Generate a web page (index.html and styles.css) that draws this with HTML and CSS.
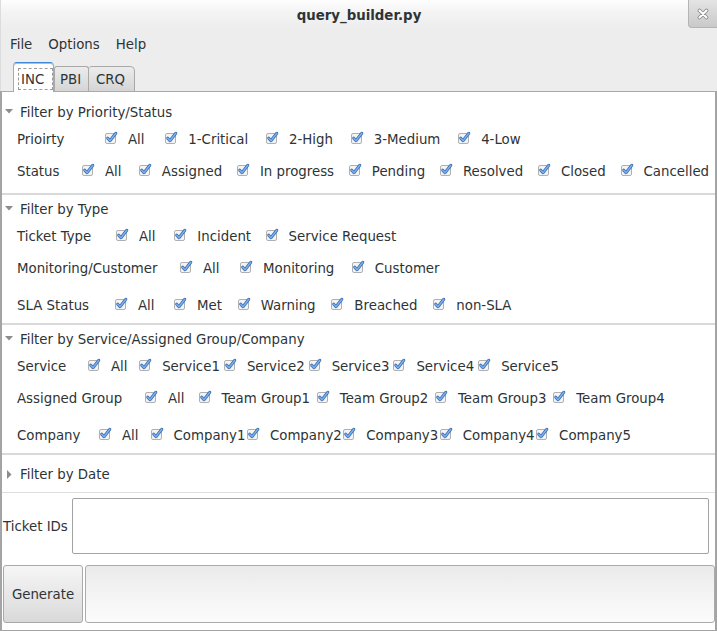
FILE: index.html
```html
<!DOCTYPE html>
<html>
<head>
<meta charset="utf-8">
<title>query_builder.py</title>
<link rel="stylesheet" href="styles.css">
</head>
<body>
<svg class="defs" width="0" height="0" aria-hidden="true">
  <symbol id="cb" viewBox="0 0 14 14">
    <rect x="1.5" y="2.5" width="10" height="10" rx="1.5" fill="#f4f4f4" stroke="#b0b0b0"/>
    <path d="M3.7 7.2 L6 9.7 L11.8 2.3" fill="none" stroke="#3b6eb3" stroke-width="3" stroke-linecap="round" stroke-linejoin="round"/>
    <path d="M3.7 7.2 L6 9.7 L11.8 2.3" fill="none" stroke="#7db0ee" stroke-width="1.4" stroke-linecap="round" stroke-linejoin="round"/>
  </symbol>
</svg>
<div class="window">
  <header class="titlebar">
    <span></span>
    <span class="title">query_builder.py</span>
    <span class="close-wrap">
      <span class="close">
        <svg width="12" height="12" viewBox="0 0 12 12">
          <path d="M2.5 2.5 L9.5 9.5 M9.5 2.5 L2.5 9.5" stroke="#8a8a8a" stroke-width="3.6" stroke-linecap="round"/>
          <path d="M2.5 2.5 L9.5 9.5 M9.5 2.5 L2.5 9.5" stroke="#ffffff" stroke-width="2" stroke-linecap="round"/>
        </svg>
      </span>
    </span>
  </header>
  <nav class="menubar">
    <span class="menu">File</span>
    <span class="menu">Options</span>
    <span class="menu">Help</span>
  </nav>
  <div class="tabbar">
    <div class="tab active"><span class="focus">INC</span></div>
    <div class="tab pbi">PBI</div>
    <div class="tab crq">CRQ</div>
  </div>
  <main class="page">
    <section class="group g1">
      <div class="expander"><svg class="arrow" width="8" height="5" viewBox="0 0 8 5"><polygon points="0,0 8,0 4,4.5" fill="#8c8c8c"/></svg><span>Filter by Priority/Status</span></div>
      <div class="rows">
        <div class="row r-prio">
          <span class="lbl w-prio">Prioirty</span>
          <span class="chk all"><svg class="cb"><use href="#cb"/></svg>All</span>
          <span class="chk"><svg class="cb"><use href="#cb"/></svg>1-Critical</span>
          <span class="chk"><svg class="cb"><use href="#cb"/></svg>2-High</span>
          <span class="chk"><svg class="cb"><use href="#cb"/></svg>3-Medium</span>
          <span class="chk"><svg class="cb"><use href="#cb"/></svg>4-Low</span>
        </div>
        <div class="row r-status">
          <span class="lbl w-status">Status</span>
          <span class="chk all"><svg class="cb"><use href="#cb"/></svg>All</span>
          <span class="chk"><svg class="cb"><use href="#cb"/></svg>Assigned</span>
          <span class="chk"><svg class="cb"><use href="#cb"/></svg>In progress</span>
          <span class="chk"><svg class="cb"><use href="#cb"/></svg>Pending</span>
          <span class="chk"><svg class="cb"><use href="#cb"/></svg>Resolved</span>
          <span class="chk"><svg class="cb"><use href="#cb"/></svg>Closed</span>
          <span class="chk"><svg class="cb"><use href="#cb"/></svg>Cancelled</span>
        </div>
      </div>
    </section>
    <section class="group g2">
      <div class="expander"><svg class="arrow" width="8" height="5" viewBox="0 0 8 5"><polygon points="0,0 8,0 4,4.5" fill="#8c8c8c"/></svg><span>Filter by Type</span></div>
      <div class="rows">
        <div class="row r-type">
          <span class="lbl w-type">Ticket Type</span>
          <span class="chk all"><svg class="cb"><use href="#cb"/></svg>All</span>
          <span class="chk"><svg class="cb"><use href="#cb"/></svg>Incident</span>
          <span class="chk"><svg class="cb"><use href="#cb"/></svg>Service Request</span>
        </div>
        <div class="row r-mon">
          <span class="lbl w-mon">Monitoring/Customer</span>
          <span class="chk all"><svg class="cb"><use href="#cb"/></svg>All</span>
          <span class="chk"><svg class="cb"><use href="#cb"/></svg>Monitoring</span>
          <span class="chk"><svg class="cb"><use href="#cb"/></svg>Customer</span>
        </div>
        <div class="row last r-sla">
          <span class="lbl w-sla">SLA Status</span>
          <span class="chk all"><svg class="cb"><use href="#cb"/></svg>All</span>
          <span class="chk"><svg class="cb"><use href="#cb"/></svg>Met</span>
          <span class="chk"><svg class="cb"><use href="#cb"/></svg>Warning</span>
          <span class="chk"><svg class="cb"><use href="#cb"/></svg>Breached</span>
          <span class="chk"><svg class="cb"><use href="#cb"/></svg>non-SLA</span>
        </div>
      </div>
    </section>
    <section class="group g3">
      <div class="expander"><svg class="arrow" width="8" height="5" viewBox="0 0 8 5"><polygon points="0,0 8,0 4,4.5" fill="#8c8c8c"/></svg><span>Filter by Service/Assigned Group/Company</span></div>
      <div class="rows">
        <div class="row r-svc">
          <span class="lbl w-svc">Service</span>
          <span class="chk all"><svg class="cb"><use href="#cb"/></svg>All</span>
          <span class="chk"><svg class="cb"><use href="#cb"/></svg>Service1</span>
          <span class="chk"><svg class="cb"><use href="#cb"/></svg>Service2</span>
          <span class="chk"><svg class="cb"><use href="#cb"/></svg>Service3</span>
          <span class="chk"><svg class="cb"><use href="#cb"/></svg>Service4</span>
          <span class="chk"><svg class="cb"><use href="#cb"/></svg>Service5</span>
        </div>
        <div class="row r-grp">
          <span class="lbl w-grp">Assigned Group</span>
          <span class="chk all"><svg class="cb"><use href="#cb"/></svg>All</span>
          <span class="chk"><svg class="cb"><use href="#cb"/></svg>Team Group1</span>
          <span class="chk"><svg class="cb"><use href="#cb"/></svg>Team Group2</span>
          <span class="chk"><svg class="cb"><use href="#cb"/></svg>Team Group3</span>
          <span class="chk"><svg class="cb"><use href="#cb"/></svg>Team Group4</span>
        </div>
        <div class="row last r-comp">
          <span class="lbl w-comp">Company</span>
          <span class="chk all"><svg class="cb"><use href="#cb"/></svg>All</span>
          <span class="chk"><svg class="cb"><use href="#cb"/></svg>Company1</span>
          <span class="chk"><svg class="cb"><use href="#cb"/></svg>Company2</span>
          <span class="chk"><svg class="cb"><use href="#cb"/></svg>Company3</span>
          <span class="chk"><svg class="cb"><use href="#cb"/></svg>Company4</span>
          <span class="chk"><svg class="cb"><use href="#cb"/></svg>Company5</span>
        </div>
      </div>
    </section>
    <section class="group g4">
      <div class="expander"><svg class="arrow-r" width="8" height="9" viewBox="0 0 8 9"><polygon points="2,0 6.5,4.5 2,9" fill="#8c8c8c"/></svg><span>Filter by Date</span></div>
    </section>
    <div class="ids-row">
      <span class="ids-label">Ticket IDs</span>
      <div class="textbox"></div>
    </div>
    <div class="gen-row">
      <button class="btn">Generate</button>
      <div class="output"></div>
    </div>
  </main>
</div>
</body>
</html>
```

FILE: styles.css
```css
* { box-sizing: border-box; }
html, body { margin: 0; padding: 0; }
body {
  width: 717px;
  height: 631px;
  overflow: hidden;
  background: #ededed;
  font-family: "DejaVu Sans", "Liberation Sans", sans-serif;
  font-size: 13.333px;
  color: #2e3436;
}
.defs { display: block; width: 0; height: 0; overflow: hidden; }

.window {
  width: 717px;
  height: 631px;
  display: flex;
  flex-direction: column;
  background: #ededed;
}

/* title bar */
.titlebar {
  height: 29px;
  flex: none;
  display: grid;
  grid-template-columns: 1fr auto 1fr;
  align-items: center;
  background: linear-gradient(#fefefe, #f4f4f4 40%, #ededed);
  border-left: 1px solid #dcdcdc;
}
.title { font-weight: bold; padding-top: 1px; }
.close-wrap { justify-self: end; align-self: start; }
.close {
  display: flex;
  align-items: center;
  justify-content: center;
  width: 29px;
  height: 28px;
  background: linear-gradient(#e4e4e4, #c9c9c9);
  border-left: 1px solid #b4b4b4;
  border-bottom: 1px solid #b4b4b4;
  border-radius: 0 0 0 4px;
}

/* menu */
.menubar {
  height: 31px;
  flex: none;
  display: flex;
  align-items: center;
  padding-left: 1px;
  border-left: 1px solid #dcdcdc;
}
.menu { padding: 0 8px; }

/* tabs */
.tabbar {
  height: 31px;
  flex: none;
  display: flex;
  align-items: flex-end;
  padding-left: 12px;
  border-left: 1px solid #dcdcdc;
}
.tab {
  height: 25px;
  display: flex;
  align-items: center;
  border: 1px solid #a9a9a9;
  border-bottom: none;
  border-radius: 3px 3px 0 0;
  background: linear-gradient(#ececec, #d5d5d5);
}
.tab.pbi { width: 35px; padding-left: 5px; }
.tab.crq { width: 46px; padding-left: 7px; border-left: none; border-top-right-radius: 5px; }
.tab.active {
  width: 41px;
  height: 30px;
  margin-bottom: -1px;
  position: relative;
  z-index: 1;
  align-items: flex-start;
  padding: 5px 0 0 4px;
  background: #ffffff;
  border-color: #a9a9a9;
  border-top: 1px solid #3d87d6;
  box-shadow: inset 0 1px 0 #9cc3ee;
  border-radius: 4px 4px 0 0;
}
.focus {
  display: flex;
  align-items: center;
  height: 22px;
  padding: 0 8px 0 2px;
  border: 1px dashed #9a9a9a;
}

/* page */
.page {
  flex: 1;
  display: flex;
  flex-direction: column;
  background: #ffffff;
  border-top: 1px solid #a9a9a9;
  border-left: 2px solid #a4a4a4;
  border-right: 2px solid #a4a4a4;
  border-bottom: 1px solid #a4a4a4;
}
.group { border-bottom: 2px solid #d9d9d9; }
.g1 { padding: 10px 0 6px; }
.g2 { padding: 4px 0 2px; }
.g3 { padding: 4px 0 2px; }
.g4 { padding: 9px 0 8px; border-bottom: 1px solid #dedede; }

.expander {
  height: 20px;
  display: flex;
  align-items: center;
  padding-left: 3px;
}
.arrow { margin-right: 7px; margin-top: -1px; }
.arrow-r { margin-right: 7px; }

.rows { margin-top: 1px; }
.row {
  height: 32px;
  display: flex;
  align-items: center;
  padding-left: 15px;
  white-space: nowrap;
}
.row.last { margin-top: 5px; }
.lbl { flex: none; }
.w-prio { width: 87px; }
.w-status { width: 64px; }
.w-type { width: 98px; }
.w-mon { width: 162px; }
.w-sla { width: 97px; }
.w-svc { width: 70px; }
.w-grp { width: 127px; }
.w-comp { width: 81px; }

.chk { display: flex; align-items: center; flex: none; margin-right: var(--g); }
.chk.all { margin-right: var(--ga); }
.cb { width: 14px; height: 14px; margin-right: 10px; margin-top: -3px; }

.r-prio { --ga: 19.8px; --g: 16.8px; }
.r-status { --ga: 16.3px; --g: 13.8px; }
.r-type { --ga: 17.8px; --g: 13.5px; }
.r-mon { --ga: 19.5px; --g: 16.5px; }
.r-sla { --ga: 18.5px; --g: 14.8px; }
.r-svc { --ga: 10.6px; --g: 3px; }
.r-grp { --ga: 13px; --g: 5.7px; }
.r-comp { --ga: 11px; --g: 0.5px; }

/* ticket ids */
.ids-row {
  margin-top: 5px;
  display: flex;
  align-items: center;
  padding-left: 1px;
  padding-right: 6px;
}
.ids-label { width: 69px; flex: none; }
.textbox {
  flex: 1;
  height: 56px;
  border: 1px solid #a3a3a3;
  border-radius: 2px;
  background: #ffffff;
}

.gen-row {
  margin-top: 11px;
  display: flex;
  height: 58px;
  padding-left: 1px;
  gap: 2px;
}
.btn {
  width: 80px;
  height: 58px;
  font: inherit;
  color: #2e3436;
  border: 1px solid #a9a9a9;
  border-radius: 3px;
  background: linear-gradient(#f6f6f6, #e8e8e8 50%, #d9d9d9);
  padding: 0;
}
.output {
  flex: 1;
  border: 1px solid #ababab;
  border-radius: 3px;
  background: linear-gradient(#eaeaea, #f4f4f4 50%, #fbfbfb);
}
```
